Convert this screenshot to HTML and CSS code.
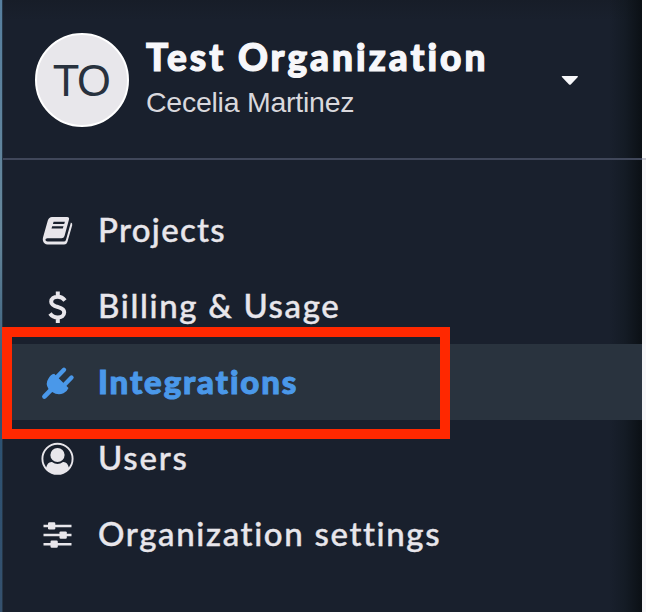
FILE: index.html
```html
<!DOCTYPE html>
<html lang="en">
<head>
<meta charset="utf-8">
<title>Test Organization</title>
<link rel="stylesheet" href="styles.css">
</head>
<body>
<div class="shell">
  <div class="edge"></div>
  <aside class="sidebar">
    <header class="org">
      <div class="avatar"><span class="initials">TO</span></div>
      <div class="identity">
        <div class="org-name">Test Organization</div>
        <div class="user-name">Cecelia Martinez</div>
      </div>
      <svg class="caret" width="18" height="10" viewBox="0 0 18 10"><path d="M1.5 0h14.6q1.3 0 .7 1.1L10 8.2q-1.1 1-2.2 0L.9 1.1Q.2 0 1.5 0z"/></svg>
    </header>
    <nav class="menu">
      <a class="item"><svg class="icon" viewBox="0 0 36 36"><path fill="currentColor" fill-rule="evenodd" d="M12 4h15.200q2.400 0 1.800 2.500l-4.500 16.500q-.6 2.200-3 2.200H7.400q-2 0-2 1.600 0 1.800 2.200 1.800H24q1.400 0 1.900-1.500l5-17.500q1.800.8 1.300 2.600l-4.800 16.700q-.8 2.500-3.300 2.500H7.500q-3.300-.3-4.500-3.500-.5-1.500 0-3.300L7.800 7.500Q9 4 12 4zM13.600 8.700l-.7 2.200h11.300l.7-2.200zM12.200 13.300l-.7 2.200h11.300l.7-2.200z"/></svg><span class="label projects">Projects</span></a>
      <a class="item"><svg class="icon" viewBox="0 0 36 36"><path fill="none" stroke="currentColor" stroke-width="4" d="M25 11.500Q22 7.700 17.700 7.800c-4 .1-6.500 2-6.500 4.900 0 3.600 3.700 4.500 7 5.400 3.500 1 6 2 6 5.200 0 3.400-2.700 5.200-6.500 5.200-3.500 0-5.900-1.500-7.700-4M17.800 2.500v5.500M17.800 28v6"/></svg><span class="label billing">Billing &amp; Usage</span></a>
      <a class="item active"><svg class="icon" viewBox="0 0 36 36"><path fill="currentColor" d="M8.500 13.500q2-4 5.700-4.800L28.500 23q-1.500 3.800-5 5.200-5.700 2.500-11.300-1.200L6 33.300Q4.200 34.700 2.700 33.200 1.300 31.600 2.700 30L8.500 24Q5 18.500 8.500 13.500z"/><path fill="none" stroke="currentColor" stroke-width="4.400" stroke-linecap="round" d="M16.500 12.500l7.500-7.700M24 20.200l7.500-7.700"/></svg><span class="label integrations">Integrations</span></a>
      <a class="item"><svg class="icon" viewBox="0 0 36 36"><circle cx="17.500" cy="17.800" r="15.100" fill="none" stroke="currentColor" stroke-width="1.900"/><circle cx="17.500" cy="14" r="7.100" fill="currentColor"/><path fill="currentColor" d="M6 27Q7.500 20.500 12 21q5.500 4 11 0 4.500-.5 6 6-4.800 5.800-11.500 5.800T6 27z"/></svg><span class="label users">Users</span></a>
      <a class="item"><svg class="icon" viewBox="0 0 36 36"><path stroke="currentColor" stroke-width="2.400" d="M3.500 9h28M3.500 18h28M3.500 27.200h28"/><g fill="currentColor"><rect x="8" y="5.200" width="7.300" height="7.300" rx="1.200"/><rect x="19.500" y="14.400" width="7.300" height="7.300" rx="1.200"/><rect x="10.500" y="23.500" width="7.300" height="7.300" rx="1.200"/></g></svg><span class="label settings">Organization settings</span></a>
    </nav>
  </aside>
  <div class="page"></div>
</div>
</body>
</html>
```
FILE: styles.css
```css
* { box-sizing: border-box; }
body { margin: 0; overflow: hidden; background: #f7f7f9; }
.shell { display: flex; width: 646px; height: 612px; }
.edge { width: 3px; background: linear-gradient(90deg, transparent 2px, #263646 2px), linear-gradient(#567f9f, #66879b 38%, #2b5273 66%, #35516e); }
.sidebar {
  width: 639px;
  color: #e8e6eb;
  background: linear-gradient(90deg, transparent 606px, rgba(13, 20, 25, .4) 622px, #0b1015 639px), linear-gradient(#171d28, #19202d 20px);
}
.org {
  display: flex;
  align-items: flex-start;
  height: 160px;
  border-bottom: 2px solid #40475a;
  padding: 33px 0 0 32px;
}
.avatar {
  display: flex;
  justify-content: center;
  align-items: center;
  width: 94px;
  height: 94px;
  border: 2px solid #fff;
  border-radius: 50%;
  background: #e8e7eb;
}
.initials { padding: 2px 2px 0 0; font: 43.5px/48px "Liberation Sans", Arial, sans-serif; letter-spacing: -1.5px; color: #28323e; }
.identity { width: 400px; margin-left: 17px; white-space: nowrap; }
.org-name { font: 900 37px/48px Lato, sans-serif; letter-spacing: 3px; color: #f7f7fa; -webkit-text-stroke: 1.2px #f7f7fa; }
.user-name { font: 28.5px/34px "Liberation Sans", Arial, sans-serif; letter-spacing: -.25px; margin-top: 4px; color: #d9d8dd; }
.caret { margin: 43px 0 0 15px; fill: #f7f7fa; }
.menu { padding-top: 32px; }
.item { position: relative; display: flex; align-items: center; height: 76px; padding-left: 37px; }
.icon { width: 36px; height: 36px; margin-right: 22px; position: relative; top: 1px; }
.label { margin-top: -2px; font: 500 33px/44px Lato, sans-serif; letter-spacing: 1.65px; white-space: nowrap; -webkit-text-stroke: .4px currentColor; }
.projects { letter-spacing: 1.3px; }
.users { letter-spacing: 1.8px; }
.active { color: #4a98e9; background: #29333e; }
.active .label { font-weight: 900; letter-spacing: 1.85px; -webkit-text-stroke-width: 1px; }
.active::after {
  content: "";
  position: absolute;
  z-index: 1;
  box-sizing: border-box;
  left: -1px;
  top: -17px;
  width: 448px;
  height: 112px;
  border: 10px solid #ff2800;
}
.page { width: 4px; background: linear-gradient(#fff 158px, #d5d5dc 158px, #d5d5dc 160px, #f7f7f9 160px); }
```
